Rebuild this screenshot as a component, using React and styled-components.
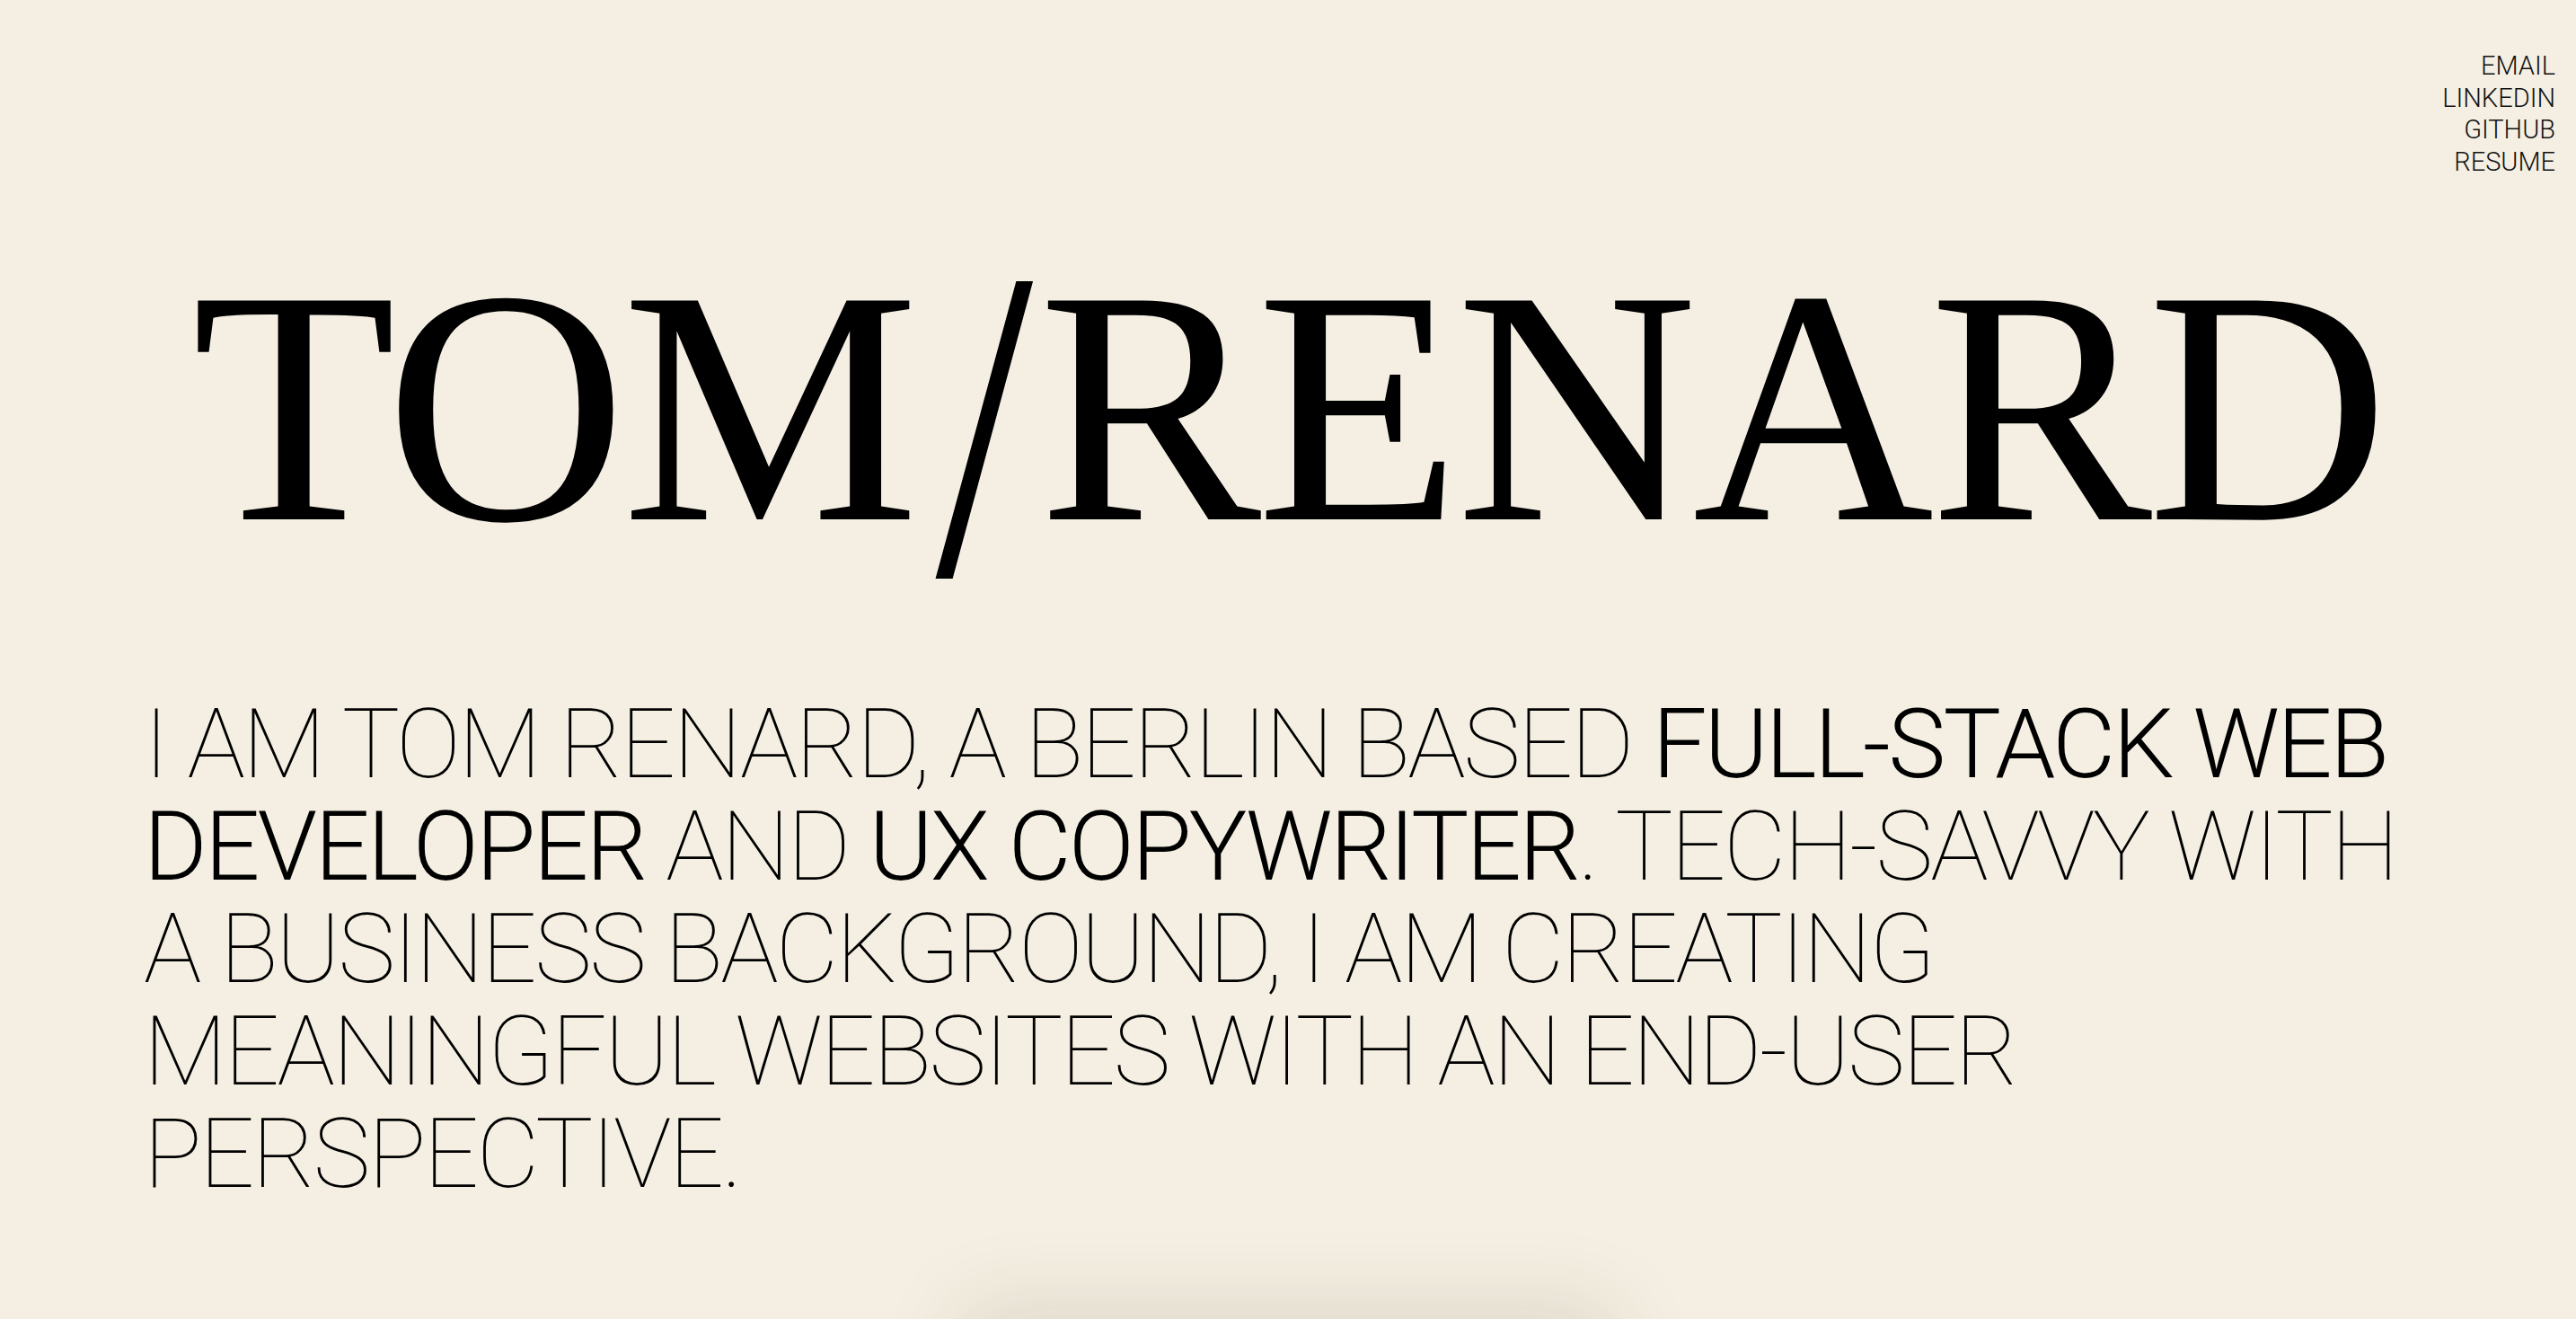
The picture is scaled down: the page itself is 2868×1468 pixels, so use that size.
import React from 'react';
import styled, { createGlobalStyle } from 'styled-components';

const GlobalStyle = createGlobalStyle`
  html, body {
    margin: 0;
    padding: 0;
    background: #f4efe2;
  }
  body {
    font-family: Roboto, 'Liberation Sans', sans-serif;
    color: #000;
  }
`;

const Hero = styled.section`
  position: relative;
  height: 100vh;
  overflow: hidden;
  background: #f4efe2;
`;

const Nav = styled.nav`
  display: flex;
  flex-direction: column;
  align-items: flex-end;
  padding: 56px 23px 0 0;
`;

const NavLink = styled.a`
  font-family: Roboto, 'Liberation Sans', sans-serif;
  font-weight: 300;
  font-size: 29px;
  line-height: 35.7px;
  color: #111;
  text-decoration: none;
  text-transform: uppercase;
`;

const Title = styled.h1`
  margin: 68px 0 0;
  text-align: center;
  font-family: 'Liberation Serif', 'Times New Roman', serif;
  font-weight: 400;
  font-size: 372px;
  line-height: 1;
  letter-spacing: -0.014em;
  color: #000;
`;

const Slash = styled.span`
  display: inline-block;
  margin: 0 14px 0 26px;
  transform: translateY(20px) scale(1.05, 1.33);
`;

const Intro = styled.p`
  margin: 132px 0 0;
  padding: 0 160px;
  font-family: Roboto, 'Liberation Sans', sans-serif;
  font-weight: 100;
  font-size: 108px;
  line-height: 114px;
  letter-spacing: -0.026em;
  text-transform: uppercase;
  white-space: nowrap;
`;

const Strong = styled.span`
  font-weight: 300;
`;

const NextCard = styled.div`
  position: absolute;
  top: 100%;
  left: 50%;
  width: 700px;
  height: 400px;
  transform: translateX(-50%);
  box-shadow: 0 0 90px 10px rgba(60, 50, 20, 0.13);
`;

const links = ['Email', 'LinkedIn', 'GitHub', 'Resume'];

export default function App() {
  return (
    <>
      <GlobalStyle />
      <Hero>
        <Nav>
          {links.map((l) => (
            <NavLink key={l} href="#">{l}</NavLink>
          ))}
        </Nav>
        <Title>
          TOM<Slash>/</Slash>RENARD
        </Title>
        <Intro>
          I am Tom Renard, a Berlin based <Strong>full-stack web</Strong>
          <br />
          <Strong>developer</Strong> and <Strong>UX copywriter</Strong>. Tech-savvy with
          <br />
          a business background, I am creating
          <br />
          meaningful websites with an end-user
          <br />
          perspective.
        </Intro>
        <NextCard />
      </Hero>
    </>
  );
}
